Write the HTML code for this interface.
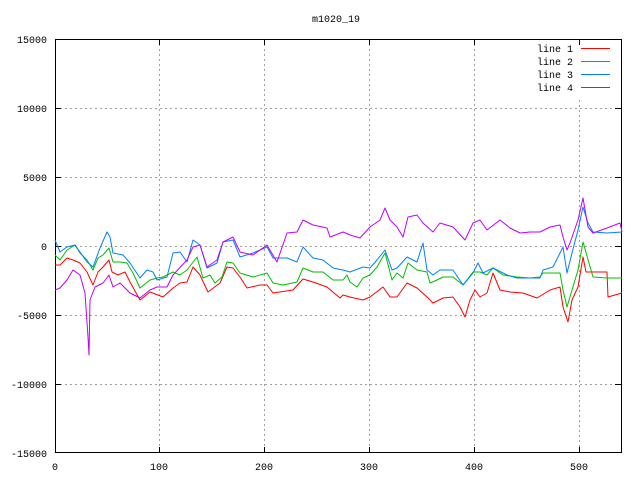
<!DOCTYPE html>
<html><head><style>
html,body{margin:0;padding:0;background:#fff;}
svg{display:block;}
text{font-family:"Liberation Mono",monospace;font-size:10px;fill:#000;}
</style></head><body>
<svg width="640" height="480" viewBox="0 0 640 480" xmlns="http://www.w3.org/2000/svg">
<rect width="640" height="480" fill="#fff"/>
<g stroke="#a0a0a0" stroke-width="1" stroke-dasharray="2,3" fill="none">
<line x1="55" y1="108.5" x2="621" y2="108.5"/>
<line x1="55" y1="177.5" x2="621" y2="177.5"/>
<line x1="55" y1="246.5" x2="621" y2="246.5"/>
<line x1="55" y1="315.5" x2="621" y2="315.5"/>
<line x1="55" y1="384.5" x2="621" y2="384.5"/>
<line x1="159.5" y1="39" x2="159.5" y2="453"/>
<line x1="264.5" y1="39" x2="264.5" y2="453"/>
<line x1="369.5" y1="39" x2="369.5" y2="453"/>
<line x1="474.5" y1="39" x2="474.5" y2="453"/>
<line x1="579.5" y1="100" x2="579.5" y2="453"/>
</g>
<rect x="55.5" y="39.5" width="566" height="413" fill="none" stroke="#000"/>
<g stroke="#000">
<line x1="55" y1="108.5" x2="61" y2="108.5"/><line x1="615" y1="108.5" x2="621" y2="108.5"/>
<line x1="55" y1="177.5" x2="61" y2="177.5"/><line x1="615" y1="177.5" x2="621" y2="177.5"/>
<line x1="55" y1="246.5" x2="61" y2="246.5"/><line x1="615" y1="246.5" x2="621" y2="246.5"/>
<line x1="55" y1="315.5" x2="61" y2="315.5"/><line x1="615" y1="315.5" x2="621" y2="315.5"/>
<line x1="55" y1="384.5" x2="61" y2="384.5"/><line x1="615" y1="384.5" x2="621" y2="384.5"/>
<line x1="159.5" y1="447" x2="159.5" y2="453"/><line x1="159.5" y1="39" x2="159.5" y2="45"/>
<line x1="264.5" y1="447" x2="264.5" y2="453"/><line x1="264.5" y1="39" x2="264.5" y2="45"/>
<line x1="369.5" y1="447" x2="369.5" y2="453"/><line x1="369.5" y1="39" x2="369.5" y2="45"/>
<line x1="474.5" y1="447" x2="474.5" y2="453"/><line x1="474.5" y1="39" x2="474.5" y2="45"/>
<line x1="579.5" y1="447" x2="579.5" y2="453"/><line x1="579.5" y1="39" x2="579.5" y2="45"/>
</g>
<g text-anchor="end">
<text x="47" y="43">15000</text>
<text x="47" y="112">10000</text>
<text x="47" y="181">5000</text>
<text x="47" y="250">0</text>
<text x="47" y="319">-5000</text>
<text x="47" y="388">-10000</text>
<text x="47" y="457">-15000</text>
</g>
<g text-anchor="middle">
<text x="55" y="470">0</text>
<text x="159" y="470">100</text>
<text x="264" y="470">200</text>
<text x="369" y="470">300</text>
<text x="474" y="470">400</text>
<text x="579" y="470">500</text>
<text x="336" y="22">m1020_19</text>
</g>
<g text-anchor="end">
<text x="573" y="52">line 1</text>
<text x="573" y="65">line 2</text>
<text x="573" y="78">line 3</text>
<text x="573" y="91">line 4</text>
</g>
<line x1="581" y1="48.5" x2="610" y2="48.5" stroke="#ff0000"/>
<line x1="581" y1="61.5" x2="610" y2="61.5" stroke="#00c000"/>
<line x1="581" y1="74.5" x2="610" y2="74.5" stroke="#0080ff"/>
<line x1="581" y1="87.5" x2="610" y2="87.5" stroke="#c000ff"/>
<g fill="none" stroke-width="1" stroke-linejoin="round">
<polyline stroke="#ff0000" points="55,265 60,265 67,258 73,260 80,263 87,272 93,285 98,272 103,267 109,260 112,272 118,275 125,272 130,282 140,300 150,292 163,297 173,288 180,283 187,282 193,267 200,275 208,292 220,283 227,267 233,268 240,277 247,288 260,285 267,285 273,293 293,290 303,279 313,282 327,287 340,298 343,295 350,297 363,300 370,297 383,287 390,297 397,297 407,283 417,288 427,297 433,303 443,298 453,297 460,307 465,317 470,300 475,290 480,297 487,293 493,273 500,290 510,292 523,293 537,298 550,290 560,287 563,307 568,322 572,300 578,287 583,257 586,272 607,272 608,297 622,293"/>
<polyline stroke="#00c000" points="55,255 60,260 67,250 75,245 80,253 87,260 93,270 98,258 103,255 109,248 113,262 120,262 127,263 133,273 140,288 150,280 157,278 163,277 173,272 180,275 187,270 197,257 203,278 210,275 215,283 222,277 227,262 233,263 240,273 253,277 267,273 273,283 283,285 297,282 303,268 313,272 323,272 333,280 343,280 347,275 350,282 357,287 363,278 370,275 377,267 385,253 392,280 397,273 403,278 408,263 417,270 427,272 430,283 437,280 443,277 453,277 463,285 473,272 480,272 487,275 493,268 503,275 517,277 530,278 540,277 543,273 560,273 563,290 567,307 572,290 578,270 583,242 593,277 607,278 622,278"/>
<polyline stroke="#0080ff" points="55,240 60,252 67,247 75,245 80,252 87,262 93,267 100,248 107,232 110,237 113,253 123,255 130,263 140,278 147,270 153,272 157,280 167,277 173,253 180,252 187,262 193,240 200,245 207,268 217,263 223,242 233,240 240,257 253,253 267,247 273,258 287,258 297,262 303,247 313,258 323,260 333,268 343,270 350,272 363,267 370,268 377,260 385,250 392,270 397,268 407,257 417,262 423,243 427,270 433,275 440,270 453,270 463,285 473,273 478,263 483,273 493,268 507,275 517,278 530,278 540,278 543,270 553,267 563,247 567,273 572,253 578,230 583,207 588,223 593,232 607,233 622,232"/>
<polyline stroke="#c000ff" points="55,290 60,288 67,280 73,270 80,275 85,293 88,337 89,355 90,300 95,287 103,283 109,275 113,287 120,283 130,293 140,298 150,290 157,287 167,287 173,275 187,260 193,247 200,245 207,267 217,260 223,242 233,237 240,252 253,255 267,245 277,262 287,233 297,232 303,220 313,225 327,228 330,237 343,232 350,235 360,238 370,227 380,220 385,208 390,220 397,227 403,237 408,217 417,215 423,223 433,232 440,223 453,227 465,240 473,223 480,220 487,230 500,220 510,228 520,233 530,232 540,232 550,227 560,225 563,237 567,250 570,243 578,220 583,198 588,227 593,233 607,228 620,223 622,232"/>
</g>
</svg>
</body></html>
